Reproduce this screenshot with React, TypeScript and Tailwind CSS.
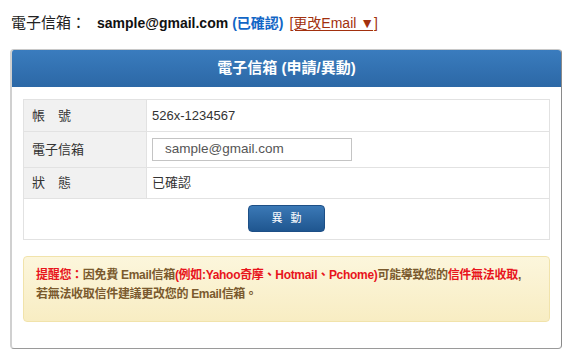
import React from 'react';

const font = { fontFamily: '"Liberation Sans", "Noto Sans CJK TC", sans-serif' };

function Row({ label, h, children }: { label: string; h: string; children: React.ReactNode }) {
  return (
    <div className={`flex border-b border-[#e2e2e2] ${h}`}>
      <div className="w-[123px] shrink-0 bg-[#f1f1f1] border-r border-[#e2e2e2] pl-[8px] flex items-center text-[13px] text-[#333]">
        {label}
      </div>
      <div className="flex-1 flex items-center pl-[5px] text-[13px] text-[#333]">{children}</div>
    </div>
  );
}

export default function App() {
  return (
    <div className="w-[574px] h-[361px] bg-white px-[10px] pt-[13px]" style={font}>
      {/* summary line */}
      <div className="flex items-center h-[20px] pl-[1px] text-[14px] text-[#222]">
        <span className="w-[86px] text-[15px]">電子信箱：</span>
        <span className="font-bold text-[#111]">sample@gmail.com</span>
        <span className="ml-[4px] font-bold text-[#1166c6]">(已確認)</span>
        <a className="ml-[6px] text-[#a2300e] underline underline-offset-2">[更改Email ▼]</a>
      </div>

      {/* panel */}
      <div className="mt-[16px] w-[552px] h-[300px] rounded-[4px] border border-[#c8c8c8] border-r-[#8a8a8a] border-b-[#9a9a9a] border-l-2 border-l-[#d0d0d0] overflow-hidden">
        <div className="h-[37px] bg-gradient-to-b from-[#3a7cbe] to-[#2c68a6] flex items-center justify-center text-white text-[15px] font-bold">
          電子信箱 (申請/異動)
        </div>

        <div className="px-[11px] pt-[12px]">
          <div className="border border-[#e2e2e2] border-b-0">
            <Row label="帳　號" h="h-[32px]">526x-1234567</Row>
            <Row label="電子信箱" h="h-[36px]">
              <div className="w-[200px] h-[23px] border border-[#c4c4c4] flex items-center pl-[12px] text-[13.5px] text-[#555]">
                sample@gmail.com
              </div>
            </Row>
            <Row label="狀　態" h="h-[31px]">已確認</Row>
            <div className="h-[41px] border-b border-[#e2e2e2] flex items-start justify-center pt-[6px]">
              <button className="w-[77px] h-[27px] rounded-[4px] bg-gradient-to-b from-[#3b79b6] to-[#1f5690] border border-[#1d4f86] text-white text-[11px] tracking-[8px] pl-[8px]">
                異動
              </button>
            </div>
          </div>

          <div className="mt-[16px] h-[66px] rounded-[4px] border border-[#f1e3ab] bg-gradient-to-b from-[#fcf6dc] to-[#f8edc3] px-[12px] pt-[9px] text-[12px] leading-[19px] font-bold text-[#7a5a2e] tracking-[-0.3px] whitespace-nowrap">
            <div>
              <span className="text-[#e8141c]">提醒您：</span>因免費 Email信箱
              <span className="text-[#e8141c]">(例如:Yahoo奇摩、Hotmail、Pchome)</span>可能導致您的
              <span className="text-[#e8141c]">信件無法收取</span>,
            </div>
            <div>若無法收取信件建議更改您的 Email信箱。</div>
          </div>
        </div>
      </div>
    </div>
  );
}
